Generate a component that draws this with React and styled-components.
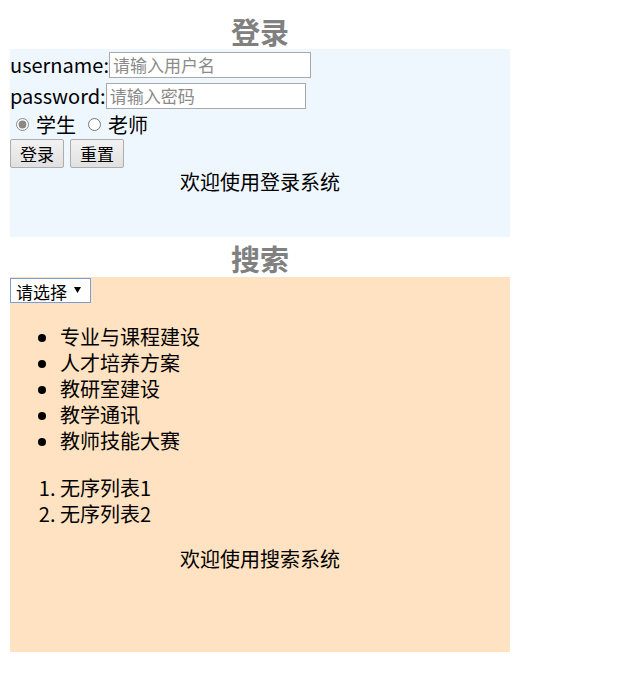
import React from "react";
import styled, { createGlobalStyle } from "styled-components";

const GlobalStyle = createGlobalStyle`
  body {
    margin: 0;
    background: #ffffff;
    font-family: "Noto Sans CJK SC", "Noto Sans", sans-serif;
    color: #000;
  }
`;

const Page = styled.div`
  width: 500px;
  padding: 10px 0 0 10px;
`;

const Title = styled.h2`
  margin: 0;
  height: ${(p) => p.$height || 39}px;
  line-height: 42px;
  font-size: 29px;
  font-weight: bold;
  color: #808080;
  text-align: center;
`;

const Panel = styled.div`
  background: ${(p) => p.$bg};
  height: ${(p) => p.$height}px;
  font-size: 20px;
  line-height: 26px;
`;

const Row = styled.div`
  display: flex;
  align-items: center;
  height: ${(p) => p.$height || 31}px;
`;

const Label = styled.label`
  font-size: 20px;
`;

const TextInput = styled.input`
  box-sizing: border-box;
  width: ${(p) => p.$width}px;
  height: 26px;
  margin: 0;
  padding: 0 3px;
  border: 1px solid #a9a9a9;
  font-family: inherit;
  font-size: 17px;
  &::placeholder {
    color: #8a8a8a;
  }
`;

const RadioLabel = styled.label`
  display: flex;
  align-items: center;
  margin-right: 6px;
  input {
    width: 13px;
    height: 13px;
    margin: 0 7px 0 6px;
    accent-color: #888;
  }
`;

const Button = styled.button`
  height: 29px;
  padding: 0 9px;
  margin-right: 6px;
  border: 1px solid #adadad;
  border-radius: 2px;
  background: linear-gradient(#f2f2f2, #e0e0e0);
  font-family: inherit;
  font-size: 17px;
  color: #000;
`;

const Welcome = styled.p`
  margin: ${(p) => p.$top}px 0 0;
  text-align: center;
`;

const SelectWrap = styled.div`
  position: relative;
  display: inline-block;
  margin-top: 1px;
  height: 25px;
`;

const Select = styled.select`
  appearance: none;
  box-sizing: border-box;
  width: 81px;
  height: 25px;
  margin: 0;
  padding: 0 18px 0 5px;
  border: 1px solid #7a9cd3;
  border-radius: 0;
  background: #fff;
  font-family: inherit;
  font-size: 17px;
  color: #000;
`;

const Arrow = styled.svg`
  position: absolute;
  right: 10px;
  top: 9px;
  width: 7px;
  height: 6px;
  pointer-events: none;
`;

const BulletList = styled.ul`
  margin: 20px 0 0;
  padding-left: 50px;
`;

const NumberList = styled.ol`
  margin: 21px 0 0;
  padding-left: 50px;
`;

const courses = ["专业与课程建设", "人才培养方案", "教研室建设", "教学通讯", "教师技能大赛"];

export default function App() {
  return (
    <>
      <GlobalStyle />
      <Page>
        <Title>登录</Title>
        <Panel $bg="#eff7fe" $height={188}>
          <Row>
            <Label>username:</Label>
            <TextInput $width={202} placeholder="请输入用户名" />
          </Row>
          <Row>
            <Label>password:</Label>
            <TextInput $width={200} type="password" placeholder="请输入密码" />
          </Row>
          <Row $height={27}>
            <RadioLabel>
              <input type="radio" name="role" defaultChecked />
              学生
            </RadioLabel>
            <RadioLabel>
              <input type="radio" name="role" />
              老师
            </RadioLabel>
          </Row>
          <Row $height={31}>
            <Button>登录</Button>
            <Button>重置</Button>
          </Row>
          <Welcome $top={0}>欢迎使用登录系统</Welcome>
        </Panel>
        <Title $height={40}>搜索</Title>
        <Panel $bg="#fee2c1" $height={375}>
          <SelectWrap>
            <Select defaultValue="">
              <option value="">请选择</option>
            </Select>
            <Arrow viewBox="0 0 7 6">
              <path d="M0 0 H7 L3.5 6 Z" fill="#000" />
            </Arrow>
          </SelectWrap>
          <BulletList>
            {courses.map((c) => (
              <li key={c}>{c}</li>
            ))}
          </BulletList>
          <NumberList>
            <li>无序列表1</li>
            <li>无序列表2</li>
          </NumberList>
          <Welcome $top={19}>欢迎使用搜索系统</Welcome>
        </Panel>
      </Page>
    </>
  );
}
